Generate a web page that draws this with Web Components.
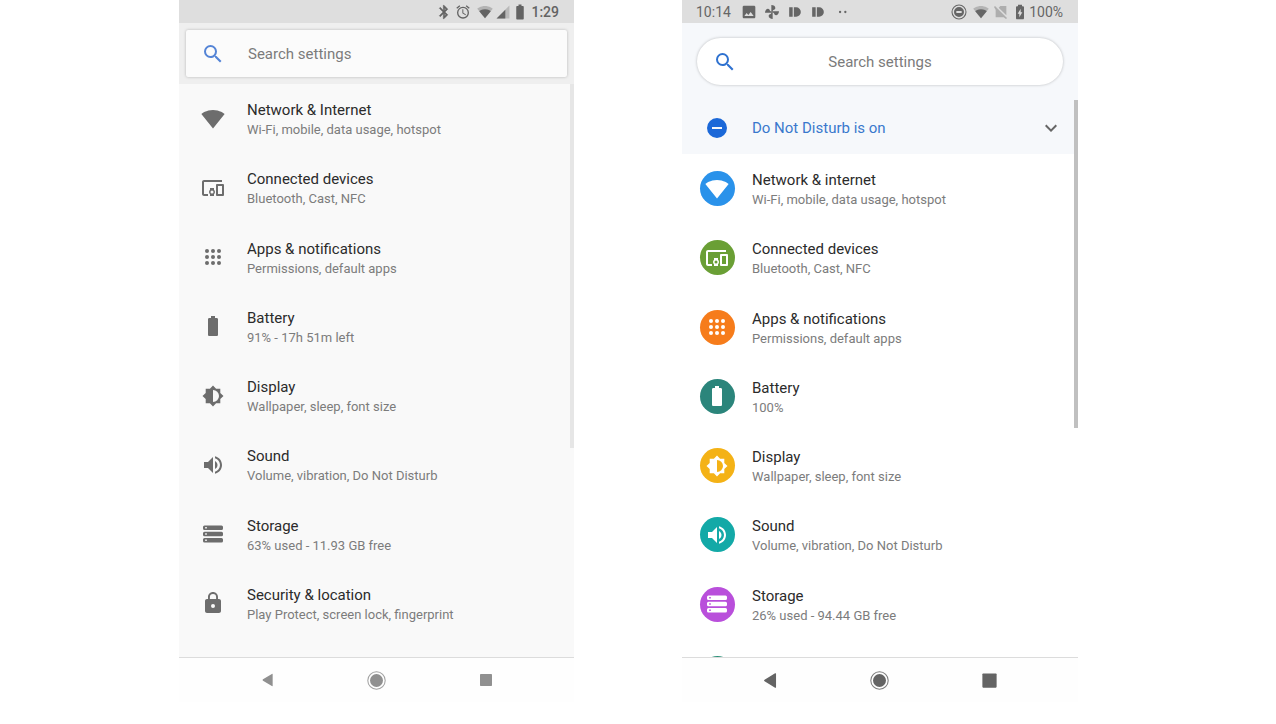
<!DOCTYPE html>
<html lang="en">
<head>
<meta charset="utf-8">
<title>Settings</title>
<style>
  body { margin: 0; background: #fff; font-family: Roboto, "Noto Sans", sans-serif; }
</style>
</head>
<body>
<settings-compare>
  <settings-phone slot="before" class="classic">
    <status-bar slot="status">
      <md-icon name="bluetooth" size="16" slot-width="18"></md-icon>
      <md-icon name="alarm" size="16" slot-width="20"></md-icon>
      <md-icon name="wifiHalf" size="16" slot-width="24"></md-icon>
      <md-icon name="signal" size="14" slot-width="12"></md-icon>
      <md-icon name="battery" size="18" slot-width="22"></md-icon>
      <b>1:29</b>
    </status-bar>
    <search-box slot="header"></search-box>
    <settings-list>
      <settings-row icon="wifi" label="Network &amp; Internet" detail="Wi-Fi, mobile, data usage, hotspot"></settings-row>
      <settings-row icon="devices" label="Connected devices" detail="Bluetooth, Cast, NFC"></settings-row>
      <settings-row icon="apps" label="Apps &amp; notifications" detail="Permissions, default apps"></settings-row>
      <settings-row icon="battery" label="Battery" detail="91% - 17h 51m left"></settings-row>
      <settings-row icon="display" label="Display" detail="Wallpaper, sleep, font size"></settings-row>
      <settings-row icon="sound" label="Sound" detail="Volume, vibration, Do Not Disturb"></settings-row>
      <settings-row icon="storage" label="Storage" detail="63% used - 11.93 GB free"></settings-row>
      <settings-row icon="lock" label="Security &amp; location" detail="Play Protect, screen lock, fingerprint"></settings-row>
    </settings-list>
    <nav-bar slot="nav"></nav-bar>
  </settings-phone>

  <settings-phone slot="after" class="modern">
    <status-bar slot="status">
      <span slot="left">10:14</span>
      <md-icon slot="left" name="image" size="16" slot-width="24"></md-icon>
      <md-icon slot="left" name="pinwheel" size="16" slot-width="23"></md-icon>
      <md-icon slot="left" name="pill" size="14" slot-width="23"></md-icon>
      <md-icon slot="left" name="pill" size="14" slot-width="23"></md-icon>
      <md-icon slot="left" name="dots" size="14" slot-width="26"></md-icon>
      <md-icon name="ring" size="16" slot-width="24"></md-icon>
      <md-icon name="wifiHalf" size="16" slot-width="20"></md-icon>
      <md-icon name="noSim" size="16" slot-width="20"></md-icon>
      <md-icon name="batteryCharge" size="16" slot-width="18"></md-icon>
      <span>100%</span>
    </status-bar>
    <search-box slot="header"></search-box>
    <dnd-banner></dnd-banner>
    <settings-list>
      <settings-row icon="wifi" tint="#2a92ea" label="Network &amp; internet" detail="Wi-Fi, mobile, data usage, hotspot"></settings-row>
      <settings-row icon="devices" tint="#6a9f35" label="Connected devices" detail="Bluetooth, Cast, NFC"></settings-row>
      <settings-row icon="apps" tint="#f67c1b" label="Apps &amp; notifications" detail="Permissions, default apps"></settings-row>
      <settings-row icon="battery" tint="#2b857b" label="Battery" detail="100%"></settings-row>
      <settings-row icon="display" tint="#f4b216" label="Display" detail="Wallpaper, sleep, font size"></settings-row>
      <settings-row icon="sound" tint="#13a9a7" label="Sound" detail="Volume, vibration, Do Not Disturb"></settings-row>
      <settings-row icon="storage" tint="#b94fdb" label="Storage" detail="26% used - 94.44 GB free"></settings-row>
      <settings-row icon="lock" tint="#2b9078"></settings-row>
    </settings-list>
    <nav-bar slot="nav"></nav-bar>
  </settings-phone>
</settings-compare>

<script>
const WIFI = 'M12 21.5L23.64 7C23.2 6.66 18.7 3 12 3S.8 6.66.36 7z';
const ICONS = {
  search: '<path d="M15.5 14h-.79l-.28-.27A6.47 6.47 0 0 0 16 9.5 6.5 6.5 0 1 0 9.5 16c1.61 0 3.09-.59 4.23-1.57l.27.28v.79l5 4.99L20.49 19l-4.99-5zm-6 0a4.5 4.5 0 1 1 0-9 4.5 4.5 0 0 1 0 9z"/>',
  wifi: `<path d="${WIFI}"/>`,
  wifiHalf: `<path opacity=".35" d="${WIFI}"/><path d="M12 21.5l8.6-10.7C20 10.3 16.9 8 12 8s-8 2.3-8.6 2.8z"/>`,
  signal: '<path opacity=".3" d="M1 23h22V1z"/><path d="M1 23h15V8z"/>',
  devices: '<path d="M3 6h18V4H3c-1.1 0-2 .9-2 2v12c0 1.1.9 2 2 2h4v-2H3V6zm10 6H9v1.78c-.61.55-1 1.33-1 2.22s.39 1.67 1 2.22V20h4v-1.78c.61-.55 1-1.34 1-2.22s-.39-1.67-1-2.22V12zm-2 5.5a1.5 1.5 0 1 1 0-3 1.5 1.5 0 0 1 0 3zM22 8h-6c-.5 0-1 .5-1 1v10c0 .5.5 1 1 1h6c.5 0 1-.5 1-1V9c0-.5-.5-1-1-1zm-1 10h-4v-8h4v8z"/>',
  apps: [6, 12, 18].map(y => [6, 12, 18].map(x => `<circle cx="${x}" cy="${y}" r="2"/>`).join('')).join(''),
  battery: '<path d="M15.67 4H14V2h-4v2H8.33C7.6 4 7 4.6 7 5.33v15.33C7 21.4 7.6 22 8.33 22h7.33c.74 0 1.34-.6 1.34-1.33V5.33C17 4.6 16.4 4 15.67 4z"/>',
  batteryCharge: '<path fill-rule="evenodd" d="M16.5 3.5H15V1H9v2.5H7.5C6.5 3.5 6 4 6 5v16c0 1 .5 2 1.5 2h9c1 0 1.5-1 1.5-2V5c0-1-.5-1.5-1.5-1.5zM11 20v-5.5H8.500L13 7v5.5h2.5z"/>',
  display: '<path fill-rule="evenodd" d="M19.3 15.1L22.5 12l-3.2-3.1V4.7h-4.2L12 1.5 8.9 4.7H4.7v4.2L1.5 12l3.2 3.1v4.2h4.2l3.1 3.2 3.1-3.2h4.2zM12 18V6a6 6 0 0 1 0 12z"/>',
  sound: '<path d="M3 9v6h4l5 5V4L7 9H3zm13.5 3c0-1.77-1.02-3.29-2.5-4.03v8.05c1.48-.73 2.5-2.25 2.5-4.02zM14 3.23v2.06c2.89.86 5 3.54 5 6.71s-2.11 5.85-5 6.71v2.06c4.01-.91 7-4.49 7-8.77s-2.99-7.86-7-8.77z"/>',
  storage: [3.5, 9.8, 16.1].map(y => `<path fill-rule="evenodd" d="M3.5 ${y}h17a1.500 1.500 0 0 1 1.500 1.500v1.400a1.500 1.500 0 0 1-1.500 1.500h-17a1.500 1.500 0 0 1-1.500-1.500v-1.400a1.500 1.500 0 0 1 1.500-1.500zm.7 1.400v1.600h1.600v-1.600z"/>`).join(''),
  lock: '<path d="M18 8h-1V6c0-2.76-2.24-5-5-5S7 3.24 7 6v2H6c-1.1 0-2 .9-2 2v10c0 1.1.9 2 2 2h12c1.1 0 2-.9 2-2V10c0-1.1-.9-2-2-2zm-6 9a2 2 0 1 1 0-4 2 2 0 0 1 0 4zm3.1-9H8.900V6a3.1 3.1 0 0 1 6.2 0v2z"/>',
  bluetooth: '<path stroke="currentColor" stroke-width=".8" d="M17.71 7.71L12 2h-1v7.59L6.41 5 5 6.41 10.59 12 5 17.59 6.41 19 11 14.41V22h1l5.71-5.71-4.3-4.29 4.3-4.29zM13 5.83l1.88 1.88L13 9.590V5.83zm1.88 10.46L13 18.17v-3.76l1.88 1.88z"/>',
  alarm: '<path d="M22 5.72l-4.6-3.86-1.29 1.53 4.6 3.86L22 5.72zM7.88 3.39L6.6 1.86 2 5.71l1.29 1.53 4.59-3.85zM12.5 8H11v6l4.75 2.85.75-1.23-4-2.37V8zM12 4a9 9 0 1 0 0 18 9 9 0 0 0 0-18zm0 16a7 7 0 1 1 0-14 7 7 0 0 1 0 14z"/>',
  image: '<path fill-rule="evenodd" d="M21.5 19.5v-15c0-1.1-.9-2-2-2h-15c-1.1 0-2 .9-2 2v15c0 1.1.9 2 2 2h15c1.1 0 2-.9 2-2zM8.500 13.5l2.5 3 3.5-4.5 4.5 6H5z"/>',
  pinwheel: [0, 90, 180, 270].map(a => `<path transform="rotate(${a} 12 12)" d="M11 13V1.5c3.500 0 6 2 6 4.500 0 1.500-1 2.500-3 3z"/>`).join(''),
  pill: '<path d="M2 4h6v16H2zM10 4h4a8 8 0 0 1 0 16h-4z"/>',
  dots: '<circle cx="7" cy="12" r="2"/><circle cx="16" cy="12" r="2"/>',
  ring: '<circle cx="12" cy="12" r="10.5" fill="none" stroke="currentColor" stroke-width="1.6"/><path fill-rule="evenodd" d="M12 4.500a7.500 7.500 0 1 0 0 15 7.500 7.500 0 0 0 0-15zM8 10.5h8v3H8z"/>',
  noSim: '<path opacity=".4" d="M20 3v14L8.500 5.5 11 3zM3 3l18 18-1.5 1.5L16 20H4V8.500L1.5 4.5z"/>',
  dnd: '<path fill-rule="evenodd" d="M12 2a10 10 0 1 0 0 20 10 10 0 0 0 0-20zM7 11v2h10v-2z"/>',
  chevron: '<path d="M7.4 8.600L12 13.200l4.600-4.600L18 10l-6 6-6-6z"/>',
  back: '<path d="M19 3.5v17c0 .8-.6 1-1.2.6L4.500 13a1.200 1.200 0 0 1 0-2L17.800 2.900c.6-.4 1.200-.2 1.200.6z"/>',
  home: '<circle cx="12" cy="12" r="11" fill="none" stroke="currentColor" stroke-width="1.3" opacity=".85"/><circle cx="12" cy="12" r="8.2"/>',
  recent: '<rect x="3" y="3" width="18" height="18" rx="1"/>'
};

class Base extends HTMLElement {
  connectedCallback() {
    if (this.shadowRoot) return;
    this.attachShadow({ mode: 'open' }).innerHTML = this.render();
  }
}
const define = (name, render) =>
  customElements.define(name, class extends Base { render() { return render(this); } });

define('md-icon', el => {
  const size = el.getAttribute('size') || 24;
  return `<style>
    :host { display: flex; justify-content: center; align-items: center; flex: none; width: ${el.getAttribute('slot-width') || size}px; }
    svg { display: block; flex: none; fill: currentColor; }
  </style>
  <svg width="${size}" height="${size}" viewBox="0 0 24 24" aria-hidden="true">${ICONS[el.getAttribute('name')]}</svg>`;
});

define('settings-compare', () => `<style>
    :host { display: grid; grid-template-columns: 179fr 395fr 108fr 396fr 198fr; height: 100vh; padding-bottom: 22px; box-sizing: border-box; }
    slot { display: contents; }
    ::slotted([slot=before]) { grid-column: 2; }
    ::slotted([slot=after]) { grid-column: 4; }
  </style><slot name="before"></slot><slot name="after"></slot>`);

define('settings-phone', () => `<style>
    :host { display: flex; flex-direction: column; min-height: 0; min-width: 0; }
    :host(.classic) {
      --header-bg: #efefef; --header-pad: 7px; --list-bg: #f9f9f9; --icon-col: 68px;
      --search-bg: #fbfbfb; --search-radius: 2px; --search-pad: 0px; --search-icon-col: 54px; --search-gap: 8px; --search-align: left; --search-icon: #5484d6;
      --thumb: #e6e6e6; --thumb-height: 364px; --nav: #909090; --nav-icon: 16px; --status: #636363;
    }
    :host(.modern) {
      --header-bg: #f6f8fb; --header-pad: 15px; --list-bg: #fff; --icon-col: 70px;
      --search-bg: #fff; --search-radius: 24px; --search-pad: 56px; --search-icon-col: 56px; --search-gap: 0px; --search-align: center; --search-icon: #2f72d0;
      --thumb: #c0c0c0; --thumb-height: 328px; --nav: #646464; --nav-icon: 19px; --status: #666;
    }
    header { padding: var(--header-pad); background: var(--header-bg); }
    main { position: relative; flex: 1; min-height: 0; overflow: hidden; background: var(--list-bg); }
    .thumb { position: absolute; top: 0; right: 0; width: 4px; height: var(--thumb-height); background: var(--thumb); }
  </style>
  <slot name="status"></slot>
  <header><slot name="header"></slot></header>
  <main><slot></slot><div class="thumb"></div></main>
  <slot name="nav"></slot>`);

define('status-bar', () => `<style>
    :host { display: flex; justify-content: space-between; height: 23px; padding: 0 15px 0 14px; background: #dedede; color: var(--status); font-size: 14px; line-height: 24px; }
    div { display: flex; align-items: center; }
    ::slotted(span[slot=left]) { margin-right: 6px; }
    ::slotted(b) { font-weight: 500; }
  </style><div><slot name="left"></slot></div><div><slot></slot></div>`);

define('search-box', () => `<style>
    :host { display: block; }
    label { display: flex; align-items: center; height: 47px; padding-right: var(--search-pad); background: var(--search-bg); border-radius: var(--search-radius); box-shadow: 0 0 3px rgba(0,0,0,.25); color: var(--search-icon); }
    .icon { display: flex; flex: none; width: var(--search-icon-col); justify-content: center; margin-right: var(--search-gap); }
    input { flex: 1; min-width: 0; border: 0; outline: 0; padding: 0; background: none; color: #333; font: 15px/20px Roboto, "Noto Sans", sans-serif; text-align: var(--search-align); }
    input::placeholder { color: #7b7b7b; opacity: 1; }
  </style>
  <label><span class="icon"><md-icon name="search"></md-icon></span><input type="text" placeholder="Search settings" aria-label="Search settings"></label>`);

define('dnd-banner', () => `<style>
    :host { display: block; }
    button { display: flex; align-items: center; width: 100%; height: 54px; border: 0; padding: 2px 15px 0 0; background: var(--header-bg); color: #3a78cd; font: 15px/20px Roboto, "Noto Sans", sans-serif; text-align: left; }
    .icon { display: flex; justify-content: center; width: var(--icon-col); color: #1b68d8; }
    .label { flex: 1; }
    .more { color: #666; }
  </style>
  <button type="button"><span class="icon"><md-icon name="dnd"></md-icon></span><span class="label">Do Not Disturb is on</span><md-icon class="more" name="chevron"></md-icon></button>`);

define('settings-list', () => `<style>
    :host { display: grid; grid-template-rows: repeat(8, 1fr); height: 554px; }
  </style><slot></slot>`);

define('settings-row', el => {
  const tint = el.getAttribute('tint');
  const text = s => (el.getAttribute(s) || '').replace(/&/g, '&amp;');
  return `<style>
    :host { display: block; min-height: 0; }
    a { display: flex; align-items: center; height: 100%; color: inherit; text-decoration: none; }
    .icon { display: flex; flex: none; justify-content: center; width: var(--icon-col); color: #6d6d6d; }
    .disc { display: flex; align-items: center; justify-content: center; width: 35px; height: 35px; border-radius: 50%; }
    .tinted { background: ${tint}; color: #fff; }
    .text { padding-top: 3px; }
    .label, .detail { display: block; line-height: 20px; white-space: nowrap; }
    .label { font-size: 15px; color: #2b2b2b; }
    .detail { font-size: 13px; color: #7c7c7c; }
  </style>
  <a href="#"><span class="icon"><span class="disc ${tint ? 'tinted' : ''}"><md-icon name="${el.getAttribute('icon')}"></md-icon></span></span>
  <span class="text"><span class="label">${text('label')}</span><span class="detail">${text('detail')}</span></span></a>`;
});

define('nav-bar', () => `<style>
    :host { display: flex; height: 44px; padding: 0 34px; border-top: 1px solid #dcdcdc; background: #fefefe; }
    button { flex: 1; display: flex; align-items: center; justify-content: center; border: 0; padding: 0; background: none; color: var(--nav); }
    svg { width: var(--nav-icon); height: var(--nav-icon); fill: currentColor; }
    .home svg { width: 19px; height: 19px; }
  </style>
  ${[['back', 'Back'], ['home', 'Home'], ['recent', 'Recent apps']].map(([n, l]) => `<button type="button" class="${n}" aria-label="${l}"><svg viewBox="0 0 24 24">${ICONS[n]}</svg></button>`).join('')}`);
</script>
</body>
</html>
